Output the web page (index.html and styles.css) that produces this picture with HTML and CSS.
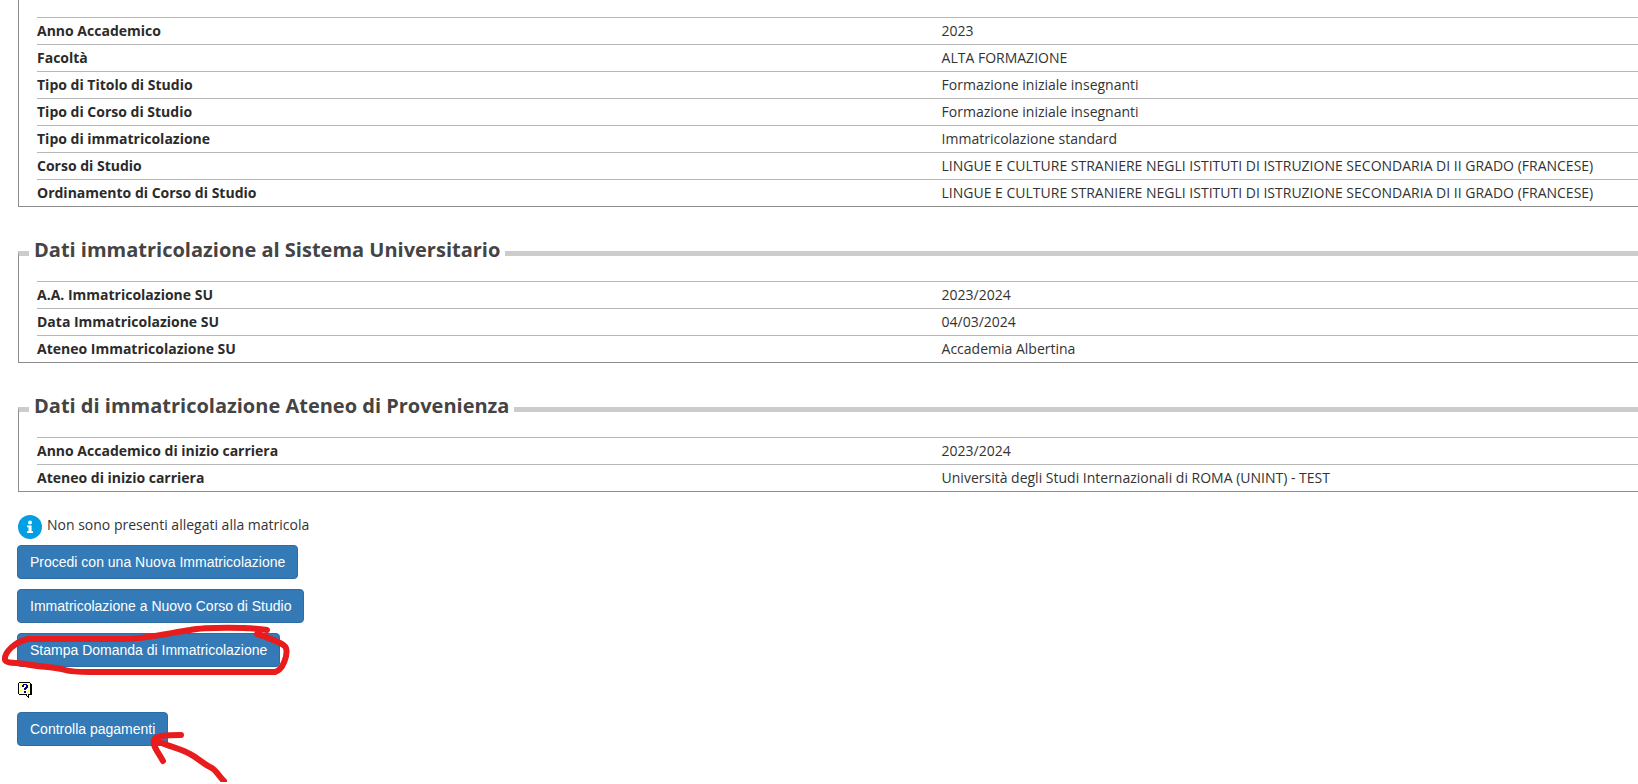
FILE: index.html
```html
<!DOCTYPE html>
<html lang="it">
<head>
    <meta charset="UTF-8">
    <meta name="viewport" content="width=device-width, initial-scale=1.0">
    <title>Immatricolazione</title>
    <link rel="stylesheet" href="styles.css">
</head>
<body>
    <main class="container">
        <fieldset class="first">
            <table>
                <tr><th scope="row">Anno Accademico</th><td>2023</td></tr>
                <tr><th scope="row">Facoltà</th><td>ALTA FORMAZIONE</td></tr>
                <tr><th scope="row">Tipo di Titolo di Studio</th><td>Formazione iniziale insegnanti</td></tr>
                <tr><th scope="row">Tipo di Corso di Studio</th><td>Formazione iniziale insegnanti</td></tr>
                <tr><th scope="row">Tipo di immatricolazione</th><td>Immatricolazione standard</td></tr>
                <tr><th scope="row">Corso di Studio</th><td>LINGUE E CULTURE STRANIERE NEGLI ISTITUTI DI ISTRUZIONE SECONDARIA DI II GRADO (FRANCESE)</td></tr>
                <tr><th scope="row">Ordinamento di Corso di Studio</th><td>LINGUE E CULTURE STRANIERE NEGLI ISTITUTI DI ISTRUZIONE SECONDARIA DI II GRADO (FRANCESE)</td></tr>
            </table>
        </fieldset>

        <fieldset>
            <legend>Dati immatricolazione al Sistema Universitario</legend>
            <table>
                <tr><th scope="row">A.A. Immatricolazione SU</th><td>2023/2024</td></tr>
                <tr><th scope="row">Data Immatricolazione SU</th><td>04/03/2024</td></tr>
                <tr><th scope="row">Ateneo Immatricolazione SU</th><td>Accademia Albertina</td></tr>
            </table>
        </fieldset>

        <fieldset>
            <legend>Dati di immatricolazione Ateneo di Provenienza</legend>
            <table>
                <tr><th scope="row">Anno Accademico di inizio carriera</th><td>2023/2024</td></tr>
                <tr><th scope="row">Ateneo di inizio carriera</th><td>Università degli Studi Internazionali di ROMA (UNINT) - TEST</td></tr>
            </table>
        </fieldset>

        <div class="message">
            <svg width="24" height="24" viewBox="0 0 24 24">
                <circle cx="12" cy="12" r="12" fill="#049fe3"/>
                <circle cx="12" cy="7.5" r="2" fill="#fff"/>
                <path d="M9 10.5h4.6v5.7H15V18H9v-1.8h1.5v-3.9H9z" fill="#fff"/>
            </svg>
            <span>Non sono presenti allegati alla matricola</span>
        </div>

        <div class="actions">
            <button type="button">Procedi con una Nuova Immatricolazione</button>
            <button type="button">Immatricolazione a Nuovo Corso di Studio</button>
            <button type="button">Stampa Domanda di Immatricolazione</button>
            <svg class="help" width="14" height="16" viewBox="0 0 14 16" shape-rendering="crispEdges">
                <path d="M1 0h11v1h1v1h1v11h-3v3h-1v-1H9v-1H8v-1H1v-1H0V1h1z" fill="#000"/>
                <path d="M1 1h11v11h-2v2H9v-2H1z" fill="#ffffd8"/>
                <path d="M2 2h1v1H2zM10 2h1v1h-1zM2 5h1v1H2zM2 8h1v1H2zM10 8h1v1h-1zM3 10h1v1H3zM9 10h1v1H9zM10 5h1v1h-1z" fill="#ffff50"/>
                <path d="M4 3h1V2h4v1h1v3H9v1H8v1H6V6h1V5h1V3H6v2H4zM6 9h2v2H6z" fill="#000080"/>
            </svg>
            <button type="button">Controlla pagamenti</button>
        </div>

        <!-- segni a penna sopra i pulsanti -->
        <svg class="marks" width="300" height="184" viewBox="0 600 300 184">
            <path d="M267 630C250 627 205 627 190 630C170 633 145 639 125 639H28C15 642 4 652 5 660C7 664 18 662 25 664C40 667 55 667 65 670C72 672 80 672 90 672H275C283 670 288 655 286 648C284 643 268 638 257 634"/>
            <path d="M181 735C165 735 155 736 154 740C152 745 158 752 163 761M157 741C170 747 182 749 190 754C198 758 202 763 210 767C217 770 218 776 224 781"/>
        </svg>
    </main>
</body>
</html>
```
FILE: styles.css
```css
* {
    box-sizing: border-box;
}

body {
    margin: 0;
    font-family: "Open Sans", sans-serif;
    font-size: 14px;
    line-height: 20px;
    color: #333;
    background-color: #fff;
}

.container {
    position: relative;
    padding: 0 0 36px 18px;
}

fieldset {
    min-width: 0;
    margin: 29px 0 0;
    padding: 0 0 0 10px;
    border: 0 solid #8c8c8c;
    border-width: 5px 0 1px 1px;
    border-top-color: #ccc;
}

.first {
    margin-top: 0;
    padding-top: 17px;
    border-top: none;
}

.first table {
    margin-top: 0;
}

legend {
    padding: 0 5px 8px;
    font-size: 20px;
    line-height: 27px;
    font-weight: bold;
    color: #444;
}

table {
    width: calc(100% - 8px);
    margin: 10px 0 0 8px;
    border-spacing: 0;
}

th, td {
    height: 27px;
    padding: 0;
    border-top: 1px solid #b7b7b7;
    text-align: left;
}

th {
    width: 56.5%;
    font-weight: bold;
    color: #2b2b2b;
}

td {
    white-space: nowrap;
}

.message {
    display: flex;
    gap: 5px;
    margin-top: 23px;
}

.actions {
    display: flex;
    flex-direction: column;
    align-items: flex-start;
    gap: 10px;
    margin: 6px 0 0 -1px;
}

button {
    height: 34px;
    padding: 6px 12px;
    font-family: "Liberation Sans", Arial, sans-serif;
    font-size: 14px;
    line-height: 20px;
    color: #fff;
    background-color: #337ab7;
    border: 1px solid #2e6da4;
    border-radius: 4px;
    cursor: pointer;
}

button:hover {
    background-color: #286090;
}

.help {
    margin: 5px 1px 4px;
}

.marks {
    position: absolute;
    top: 600px;
    left: 0;
    fill: none;
    stroke: #e81c1c;
    stroke-width: 6;
    stroke-linecap: round;
    stroke-linejoin: round;
    pointer-events: none;
}
```
